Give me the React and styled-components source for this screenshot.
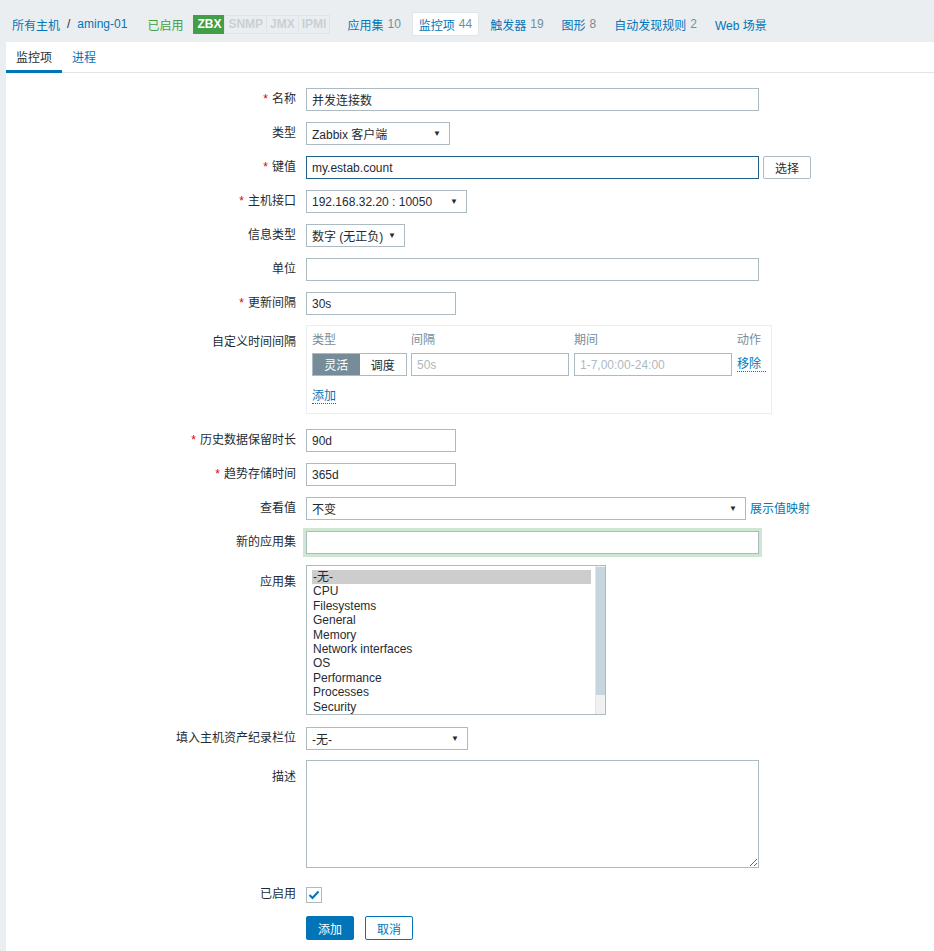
import React from "react";
import styled, { createGlobalStyle } from "styled-components";

const GlobalStyle = createGlobalStyle`
  html, body {
    margin: 0;
    padding: 0;
    background: #ebeef0;
  }
  body {
    font-family: "Liberation Sans", Arial, "Noto Sans CJK SC", sans-serif;
    font-size: 12px;
    color: #1f2c33;
  }
`;

const Page = styled.div`
  width: 934px;
  min-height: 951px;
  background: #ebeef0;
`;

const HeaderBar = styled.div`
  display: flex;
  align-items: center;
  height: 42px;
  padding: 6px 0 0 12px;
  box-sizing: border-box;
  white-space: nowrap;
`;

const Crumb = styled.span`
  color: #0275b8;
  margin-right: ${(p) => p.$mr || 0}px;
`;

const Sep = styled.span`
  color: #1f2c33;
  margin: 0 7px;
`;

const Enabled = styled.span`
  color: #429e47;
  margin-right: 11px;
`;

const Badges = styled.div`
  display: flex;
  margin-right: 10px;
`;

const Badge = styled.span`
  height: 17px;
  line-height: 17px;
  padding: 0 3px;
  font-weight: bold;
  font-size: 12px;
  border: 1px solid ${(p) => (p.$on ? "#429e47" : "#dfe4e7")};
  background: ${(p) => (p.$on ? "#429e47" : "#ebeef0")};
  color: ${(p) => (p.$on ? "#fff" : "#c9d0d4")};
  margin-left: -1px;
`;

const NavItem = styled.span`
  display: flex;
  align-items: center;
  height: 22px;
  padding: 0 6px;
  margin-right: 4px;
  color: #0275b8;
  background: ${(p) => (p.$active ? "#fff" : "transparent")};
  border: 1px solid ${(p) => (p.$active ? "#dfe4e7" : "transparent")};
  border-radius: 2px;
`;

const Count = styled.span`
  color: #768d99;
  margin-left: 4px;
`;

const Panel = styled.div`
  margin-left: 6px;
  background: #fff;
  min-height: 909px;
  padding-bottom: 10px;
`;

const TabBar = styled.div`
  display: flex;
  height: 31px;
  border-bottom: 1px solid #dfe4e7;
  box-sizing: border-box;
`;

const Tab = styled.div`
  display: flex;
  align-items: center;
  padding: 0 10px;
  color: ${(p) => (p.$active ? "#1f2c33" : "#0275b8")};
  border-bottom: 3px solid ${(p) => (p.$active ? "#0275b8" : "transparent")};
  margin-bottom: -1px;
`;

const Form = styled.div`
  display: grid;
  grid-template-columns: 290px 1fr;
  column-gap: 10px;
  padding-top: 15px;
`;

const Label = styled.div`
  text-align: right;
  padding-top: ${(p) => (p.$top ? 6 : 0)}px;
  height: ${(p) => (p.$top ? "auto" : "23px")};
  line-height: 23px;
  margin-bottom: ${(p) => p.$mb ?? 11}px;
  white-space: nowrap;
`;

const Star = styled.span`
  color: #dc0000;
  margin-right: 4px;
`;

const Field = styled.div`
  display: flex;
  align-items: ${(p) => (p.$top ? "flex-start" : "center")};
  gap: 4px;
  margin-bottom: ${(p) => p.$mb ?? 11}px;
  min-height: 23px;
`;

const TextInput = styled.input`
  box-sizing: border-box;
  width: ${(p) => p.$w}px;
  height: 23px;
  padding: 0 5px;
  border: 1px solid ${(p) => (p.$focus ? "#1f5f88" : "#acbbc2")};
  background: #fff;
  font-family: "Liberation Sans", Arial, "Noto Sans CJK SC", sans-serif;
  font-size: 12px;
  color: #1f2c33;
  outline: none;
  box-shadow: ${(p) => (p.$glow ? "0 0 0 3px #cfe6d3" : "none")};
  &::placeholder {
    color: #acbbc2;
  }
`;

const Select = styled.div`
  box-sizing: border-box;
  width: ${(p) => p.$w}px;
  height: 23px;
  display: flex;
  align-items: center;
  justify-content: space-between;
  padding: 0 8px 0 5px;
  border: 1px solid #acbbc2;
  background: #fff;
  white-space: nowrap;
`;

const Arrow = styled.span`
  font-size: 8px;
  color: #1f2c33;
`;

const Button = styled.button`
  box-sizing: border-box;
  height: ${(p) => (p.$gray ? 23 : 24)}px;
  width: 48px;
  padding: 0;
  font-family: "Liberation Sans", Arial, "Noto Sans CJK SC", sans-serif;
  font-size: 12px;
  border-radius: 2px;
  border: 1px solid ${(p) => (p.$primary ? "#0275b8" : p.$gray ? "#acbbc2" : "#0275b8")};
  background: ${(p) => (p.$primary ? "#0275b8" : "#fff")};
  color: ${(p) => (p.$primary ? "#fff" : p.$gray ? "#1f2c33" : "#0275b8")};
`;

const Link = styled.span`
  color: #0275b8;
  border-bottom: ${(p) => (p.$dotted ? "1px dotted #0275b8" : "none")};
  line-height: 14px;
  white-space: nowrap;
`;

const IntervalBox = styled.div`
  width: 466px;
  box-sizing: border-box;
  border: 1px solid #ebeef0;
  padding: 4px 5px 10px 5px;
`;

const IntervalGrid = styled.div`
  display: grid;
  grid-template-columns: 99px 163px 163px auto;
  row-gap: 6px;
  align-items: center;
`;

const ColHead = styled.div`
  color: #768d99;
`;

const Segmented = styled.div`
  display: flex;
  width: 95px;
  height: 23px;
  box-sizing: border-box;
  border: 1px solid #acbbc2;
`;

const Seg = styled.div`
  flex: 1;
  display: flex;
  align-items: center;
  justify-content: center;
  background: ${(p) => (p.$on ? "#768d99" : "#fff")};
  color: ${(p) => (p.$on ? "#fff" : "#1f2c33")};
`;

const AddRow = styled.div`
  margin-top: 13px;
`;

const ListBox = styled.div`
  display: flex;
  width: 300px;
  height: 150px;
  box-sizing: border-box;
  border: 1px solid #acbbc2;
  overflow: hidden;
`;

const ListItems = styled.div`
  flex: 1;
  padding: 4px 4px 0 5px;
`;

const ListItem = styled.div`
  font-size: 12px;
  line-height: 14.4px;
  padding-left: 1px;
  color: #1f2c33;
  background: ${(p) => (p.$sel ? "#cdcdcd" : "transparent")};
`;

const ScrollTrack = styled.div`
  width: 9px;
  display: flex;
  flex-direction: column;
  background: #f1f1f1;
  border-left: 1px solid #e6e6e6;
`;

const ScrollThumb = styled.div`
  height: 128px;
  margin-top: 1px;
  background: #c7d5dc;
`;

const TextArea = styled.textarea`
  box-sizing: border-box;
  width: 453px;
  height: 108px;
  border: 1px solid #acbbc2;
  font-family: "Liberation Sans", Arial, sans-serif;
  outline: none;
`;

const Check = styled.div`
  width: 16px;
  height: 16px;
  box-sizing: border-box;
  border: 1px solid #acbbc2;
  display: flex;
  align-items: center;
  justify-content: center;
`;

const Buttons = styled.div`
  display: flex;
  gap: 11px;
`;

const apps = [
  "-无-",
  "CPU",
  "Filesystems",
  "General",
  "Memory",
  "Network interfaces",
  "OS",
  "Performance",
  "Processes",
  "Security",
];

const Req = ({ children }) => (
  <>
    <Star>*</Star>
    {children}
  </>
);

export default function App() {
  return (
    <Page>
      <GlobalStyle />
      <HeaderBar>
        <Crumb>所有主机</Crumb>
        <Sep>/</Sep>
        <Crumb $mr={20}>aming-01</Crumb>
        <Enabled>已启用</Enabled>
        <Badges>
          <Badge $on>ZBX</Badge>
          <Badge>SNMP</Badge>
          <Badge>JMX</Badge>
          <Badge>IPMI</Badge>
        </Badges>
        <NavItem>应用集<Count>10</Count></NavItem>
        <NavItem $active>监控项<Count>44</Count></NavItem>
        <NavItem>触发器<Count>19</Count></NavItem>
        <NavItem>图形<Count>8</Count></NavItem>
        <NavItem>自动发现规则<Count>2</Count></NavItem>
        <NavItem>Web 场景</NavItem>
      </HeaderBar>

      <Panel>
        <TabBar>
          <Tab $active>监控项</Tab>
          <Tab>进程</Tab>
        </TabBar>

        <Form>
          <Label><Req>名称</Req></Label>
          <Field><TextInput $w={453} defaultValue="并发连接数" /></Field>

          <Label>类型</Label>
          <Field><Select $w={144}>Zabbix 客户端<Arrow>▼</Arrow></Select></Field>

          <Label><Req>键值</Req></Label>
          <Field>
            <TextInput $w={453} $focus defaultValue="my.estab.count" />
            <Button $gray>选择</Button>
          </Field>

          <Label><Req>主机接口</Req></Label>
          <Field><Select $w={161}>192.168.32.20 : 10050<Arrow>▼</Arrow></Select></Field>

          <Label>信息类型</Label>
          <Field><Select $w={99}>数字 (无正负)<Arrow>▼</Arrow></Select></Field>

          <Label>单位</Label>
          <Field><TextInput $w={453} /></Field>

          <Label $mb={10}><Req>更新间隔</Req></Label>
          <Field $mb={10}><TextInput $w={150} defaultValue="30s" /></Field>

          <Label $top $mb={15}>自定义时间间隔</Label>
          <Field $top $mb={15}>
            <IntervalBox>
              <IntervalGrid>
                <ColHead>类型</ColHead>
                <ColHead>间隔</ColHead>
                <ColHead>期间</ColHead>
                <ColHead>动作</ColHead>
                <Segmented>
                  <Seg $on>灵活</Seg>
                  <Seg>调度</Seg>
                </Segmented>
                <TextInput $w={158} placeholder="50s" />
                <TextInput $w={158} placeholder="1-7,00:00-24:00" />
                <Link $dotted>移除</Link>
              </IntervalGrid>
              <AddRow><Link $dotted>添加</Link></AddRow>
            </IntervalBox>
          </Field>

          <Label><Req>历史数据保留时长</Req></Label>
          <Field><TextInput $w={150} defaultValue="90d" /></Field>

          <Label><Req>趋势存储时间</Req></Label>
          <Field><TextInput $w={150} defaultValue="365d" /></Field>

          <Label>查看值</Label>
          <Field>
            <Select $w={440}>不变<Arrow>▼</Arrow></Select>
            <Link>展示值映射</Link>
          </Field>

          <Label>新的应用集</Label>
          <Field><TextInput $w={453} $glow /></Field>

          <Label $top $mb={12}>应用集</Label>
          <Field $top $mb={12}>
            <ListBox>
              <ListItems>
                {apps.map((a, i) => (
                  <ListItem key={a} $sel={i === 0}>{a}</ListItem>
                ))}
              </ListItems>
              <ScrollTrack>
                <ScrollThumb />
              </ScrollTrack>
            </ListBox>
          </Field>

          <Label $mb={10}>填入主机资产纪录栏位</Label>
          <Field $mb={10}><Select $w={162}>-无-<Arrow>▼</Arrow></Select></Field>

          <Label $top>描述</Label>
          <Field $top $mb={15}><TextArea /></Field>

          <Label $mb={10}>已启用</Label>
          <Field $mb={10}>
            <Check>
              <svg width="12" height="10" viewBox="0 0 12 10">
                <path d="M1.5 5 L4.5 8 L10.5 1.5" fill="none" stroke="#0275b8" strokeWidth="2" />
              </svg>
            </Check>
          </Field>

          <div />
          <Field>
            <Buttons>
              <Button $primary>添加</Button>
              <Button>取消</Button>
            </Buttons>
          </Field>
        </Form>
      </Panel>
    </Page>
  );
}
